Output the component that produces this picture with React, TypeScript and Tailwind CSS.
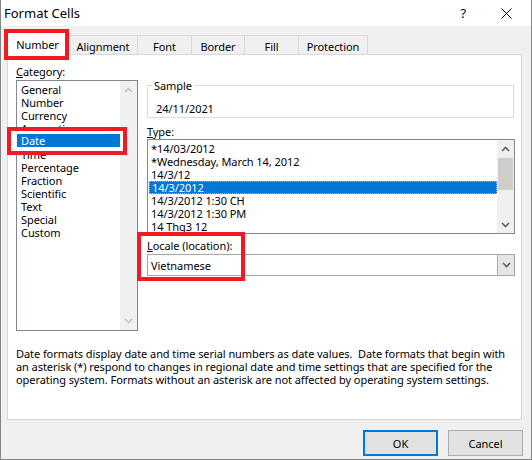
const CATEGORIES = [
  "General",
  "Number",
  "Currency",
  "Accounting",
  "Date",
  "Time",
  "Percentage",
  "Fraction",
  "Scientific",
  "Text",
  "Special",
  "Custom",
];

const TYPES = [
  "*14/03/2012",
  "*Wednesday, March 14, 2012",
  "14/3/12",
  "14/3/2012",
  "14/3/2012 1:30 CH",
  "14/3/2012 1:30 PM",
  "14 Thg3 12",
];

const TABS = [
  { label: "Alignment", w: "w-[69px]" },
  { label: "Font", w: "w-[54px]" },
  { label: "Border", w: "w-[53px]" },
  { label: "Fill", w: "w-[54px]" },
  { label: "Protection", w: "w-[70px] border-r" },
];

function Chevron({ up, className }: { up?: boolean; className?: string }) {
  return (
    <svg width="9" height="6" viewBox="0 0 9 6" className={className}>
      <path
        d={up ? "M1 5 L4.5 1.5 L8 5" : "M1 1 L4.5 4.5 L8 1"}
        fill="none"
        stroke="currentColor"
        strokeWidth="1.6"
      />
    </svg>
  );
}

export default function App() {
  return (
    <div className="w-[532px] h-[460px] bg-white text-black font-['Noto_Sans',sans-serif] text-[11px] leading-[13px] tracking-[-0.07px]">
      <div className="relative w-[532px] h-[460px] flex flex-col border-x border-b border-[#858585] bg-[#f0f0f0]">
        {/* title bar */}
        <div className="h-[26px] bg-white flex items-center pl-[3px] shrink-0">
          <span className="text-[13px] leading-[16px] tracking-normal">Format Cells</span>
          <span className="ml-auto mr-[35px] text-[13px] leading-[16px]">?</span>
          <svg width="11" height="11" viewBox="0 0 11 11" className="mr-[19px]">
            <path d="M0.5 0.5 L10.5 10.5 M10.5 0.5 L0.5 10.5" stroke="#000" strokeWidth="1" />
          </svg>
        </div>

        {/* tabs */}
        <div className="flex items-end h-[28px] pl-[6px] shrink-0">
          <div className="w-[61px] h-[24px] -mb-px bg-white border-x border-t border-[#d9d9d9] relative z-10 flex items-center justify-center pt-[2px]">
            Number
          </div>
          {TABS.map((t) => (
            <div
              key={t.label}
              className={`${t.w} h-[19px] pt-[2px] border-l border-t border-[#d9d9d9] flex items-center justify-center`}
            >
              {t.label}
            </div>
          ))}
        </div>

        {/* panel */}
        <div className="ml-[6px] w-[515px] h-[366px] bg-white border border-[#d9d9d9] pl-[8px] pr-[6px] pt-[10px] shrink-0">
          <div className="flex gap-[9px]">
            {/* category */}
            <div className="w-[122px]">
              <div className="h-[13px]">
                <span className="underline">C</span>ategory:
              </div>
              <div className="mt-[2px] h-[251px] border border-[#828790] flex">
                <div className="flex-1 pt-[2px]">
                  {CATEGORIES.map((c) => (
                    <div
                      key={c}
                      className={`h-[13px] pl-[4px] ${c === "Date" ? "bg-[#0078d7] text-white" : ""}`}
                    >
                      {c}
                    </div>
                  ))}
                </div>
                <div className="w-[17px] bg-[#f0f0f0] flex flex-col justify-between items-center py-[6px] text-[#c2c2c2]">
                  <Chevron up />
                  <Chevron />
                </div>
              </div>
            </div>

            {/* right column */}
            <div className="w-[368px] pt-[20px]">
              <div className="relative w-[367px] h-[33px] border border-[#dcdcdc] pl-[8px] pt-[16px]">
                <span className="absolute -top-[7px] left-[4px] bg-white px-[2px]">Sample</span>
                24/11/2021
              </div>
              <div className="mt-[7px] h-[13px]">
                <span className="underline">T</span>ype:
              </div>
              <div className="mt-[1px] h-[95px] border border-[#828790] flex overflow-hidden">
                <div className="flex-1 pt-[2px] pl-[1px]">
                  {TYPES.map((t) => (
                    <div
                      key={t}
                      className={`h-[13px] pl-[2px] whitespace-nowrap ${
                        t === "14/3/2012"
                          ? "bg-[#0078d7] text-white border border-dotted border-[#f5a623] leading-[11px] pl-[1px]"
                          : ""
                      }`}
                    >
                      {t}
                    </div>
                  ))}
                </div>
                <div className="w-[17px] bg-[#f0f0f0] flex flex-col items-center text-[#606060]">
                  <div className="h-[17px] flex items-center justify-center">
                    <Chevron up />
                  </div>
                  <div className="w-[15px] h-[32px] mt-[1px] bg-[#cdcdcd]" />
                  <div className="mt-auto h-[17px] flex items-center justify-center">
                    <Chevron />
                  </div>
                </div>
              </div>
              <div className="mt-[5px] h-[13px]">
                <span className="underline">L</span>ocale (location):
              </div>
              <div className="mt-[2px] h-[22px] border border-[#a6a6a6] flex items-center">
                <span className="pl-[3px] flex-1">Vietnamese</span>
                <div className="w-[17px] h-full bg-[#e5e5e5] border-l border-[#adadad] flex items-center justify-center text-[#606060]">
                  <Chevron />
                </div>
              </div>
            </div>
          </div>

          {/* description */}
          <div className="mt-[16px] whitespace-pre">
            <div>Date formats display date and time serial numbers as date values.  Date formats that begin with</div>
            <div>an asterisk (*) respond to changes in regional date and time settings that are specified for the</div>
            <div>operating system. Formats without an asterisk are not affected by operating system settings.</div>
          </div>
        </div>

        {/* buttons */}
        <div className="flex justify-end gap-[10px] pr-[8px] mt-[10px]">
          <button className="w-[75px] h-[26px] bg-[#e1e1e1] border-2 border-[#0078d7]">OK</button>
          <button className="w-[75px] h-[26px] bg-[#e1e1e1] border border-[#adadad]">Cancel</button>
        </div>

        {/* red annotation boxes */}
        <div className="absolute left-[3px] top-[29px] w-[65px] h-[31px] border-[4px] border-[#ed1c24] z-20" />
        <div className="absolute left-[6px] top-[127px] w-[120px] h-[28px] border-[4px] border-[#ed1c24] bg-white z-20">
          <div className="ml-[6px] mt-[3px] w-[103px] h-[13px] bg-[#0078d7] text-white pl-[4px]">Date</div>
        </div>
        <div className="absolute left-[136px] top-[232px] w-[108px] h-[49px] border-[4px] border-[#ed1c24] z-20" />
      </div>
    </div>
  );
}
